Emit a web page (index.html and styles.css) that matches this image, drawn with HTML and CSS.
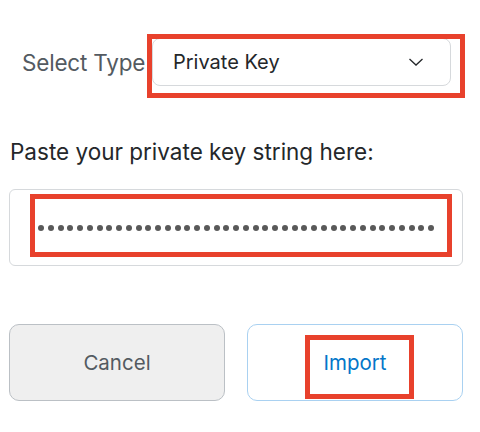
FILE: index.html
```html
<!DOCTYPE html>
<html>
<head>
<meta charset="utf-8">
<link rel="stylesheet" href="styles.css">
</head>
<body>
<div class="page">
  <div class="type-row">
    <span class="type-label">Select Type</span>
    <div class="select">
      <span class="select-value">Private Key</span>
      <svg class="chevron" width="16" height="10" viewBox="0 0 16 10"><path d="M1.5 2 L8 8 L14.5 2" fill="none" stroke="#24272a" stroke-width="1.3"/></svg>
      <div class="mark mark-select"></div>
    </div>
  </div>
  <p class="paste-label">Paste your private key string here:</p>
  <div class="key-box">
    <div class="dots"><i></i><i></i><i></i><i></i><i></i><i></i><i></i><i></i><i></i><i></i><i></i><i></i><i></i><i></i><i></i><i></i><i></i><i></i><i></i><i></i><i></i><i></i><i></i><i></i><i></i><i></i><i></i><i></i><i></i><i></i><i></i><i></i><i></i><i></i><i></i><i></i><i></i><i></i><i></i><i></i><i></i></div>
    <div class="mark mark-key"></div>
  </div>
  <div class="buttons">
    <button class="btn btn-cancel">Cancel</button>
    <button class="btn btn-import">Import<span class="mark mark-import"></span></button>
  </div>
</div>
</body>
</html>
```
FILE: styles.css
```css
* { box-sizing: border-box; }
html, body { margin: 0; padding: 0; background: #fff; }
body { font-family: "Inter", "Lato", sans-serif; }
.page { padding: 0 17px 0 9px; }
.type-row {
  display: flex;
  align-items: center;
  margin-top: 38px;
  padding-left: 13px;
}
.type-label {
  font-size: 22.5px;
  color: #535a61;
  width: 130px;
  letter-spacing: -0.2px;
  white-space: nowrap;
}
.select {
  position: relative;
  width: 299px;
  height: 48px;
  border: 1px solid #d6d9dc;
  border-radius: 8px;
  display: flex;
  align-items: center;
  padding: 0 26px 0 20px;
  justify-content: space-between;
}
.select-value { font-size: 20px; color: #24272a; }
.chevron { display: block; }
.mark {
  position: absolute;
  border: 5px solid #e8412c;
  pointer-events: none;
}
.mark-select { left: -6px; top: -5px; right: -15px; bottom: -13px; }
.paste-label {
  margin: 52px 0 0 1px;
  font-size: 22.5px;
  line-height: 27px;
  color: #24272a;
  white-space: nowrap;
}
.key-box {
  position: relative;
  margin-top: 24px;
  height: 77px;
  border: 1px solid #d6d9dc;
  border-radius: 6px;
  display: flex;
  align-items: center;
  padding: 0 0 0 28px;
}
.dots { display: flex; gap: 3.75px; margin-top: 1px; }
.dots i { width: 6px; height: 6px; border-radius: 50%; background: #595959; display: block; }
.mark-key { left: 20px; top: 4px; right: 10px; bottom: 8px; }
.buttons {
  display: flex;
  gap: 22px;
  margin-top: 58px;
}
.btn {
  position: relative;
  flex: 1;
  height: 77px;
  border-radius: 10px;
  font-family: inherit;
  font-size: 20.5px;
  padding: 0;
}
.btn-cancel { background: #efefef; border: 1px solid #bbc0c5; color: #535a61; }
.btn-import { background: #fff; border: 1px solid #a9d1f1; color: #0376c9; }
.mark-import { left: 57px; top: 10px; width: 109px; height: 64px; }
```
